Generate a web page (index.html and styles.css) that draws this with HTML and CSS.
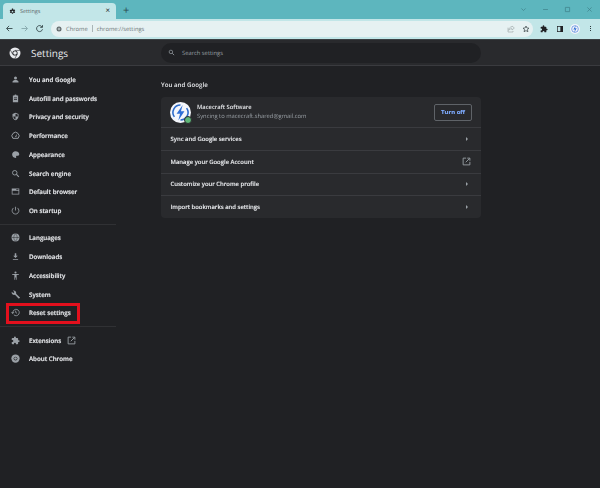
FILE: index.html
```html
<!DOCTYPE html>
<html>
  <head>
    <title>Settings</title>
    <link rel="stylesheet" href="styles.css">
  </head>
  <body>
    <svg class="icon-defs" width="0" height="0">
      <symbol id="i-logo" viewBox="0 0 24 24"><circle cx="12" cy="12" r="11" fill="#e8eaed"/><circle cx="12" cy="12" r="5.2" fill="#202124"/><circle cx="12" cy="12" r="3.6" fill="#e8eaed"/><path d="M12 6.8h10M7.5 14.6 2.6 6M16.5 14.6 11.6 23" stroke="#202124" stroke-width="1.2" fill="none"/></symbol>
      <symbol id="i-person" viewBox="0 0 24 24"><circle cx="12" cy="8" r="4"/><path d="M4 20v-2c0-3 5-4.500 8-4.500s8 1.500 8 4.500v2z"/></symbol>
      <symbol id="i-clip" viewBox="0 0 24 24"><path fill-rule="evenodd" d="M5 4h4a3 3 0 0 1 6 0h4v18H5zM8 9v2h8V9zm0 4v2h8v-2z"/></symbol>
      <symbol id="i-shield" viewBox="0 0 24 24"><path fill-rule="evenodd" d="M12 2l8 3v6c0 5-3.400 9.500-8 11-4.600-1.500-8-6-8-11V5zm0 2.500V12H6c.3 3.700 2.800 6.800 6 8v-8h6V6.500z"/></symbol>
      <symbol id="i-gauge" viewBox="0 0 24 24"><path fill="none" stroke="currentColor" stroke-width="2.600" d="M5 19.500a9.500 9.500 0 1 1 14 0z"/><path d="M10.500 15l6-8-2.500 9z"/></symbol>
      <symbol id="i-palette" viewBox="0 0 24 24"><path d="M12 3c-5 0-9 4-9 9s4 9 9 9c1.500 0 2-1 2-2s-1-1.500-.5-2.500 1.500-1 3-1c3 0 5.500-1.500 5.500-4.500C22 6 17 3 12 3z"/></symbol>
      <symbol id="i-search" viewBox="0 0 24 24"><circle cx="10" cy="10" r="6" fill="none" stroke="currentColor" stroke-width="2.400"/><path d="M14.500 14.500 21 21" stroke="currentColor" stroke-width="2.800"/></symbol>
      <symbol id="i-browser" viewBox="0 0 24 24"><path fill-rule="evenodd" d="M2 4h20v16H2zm2 6v8h16v-8zm10-4v2h6V6z"/></symbol>
      <symbol id="i-power" viewBox="0 0 24 24"><path fill="none" stroke="currentColor" stroke-width="2.200" d="M12 2v10M7 5a9 9 0 1 0 10 0"/></symbol>
      <symbol id="i-globe" viewBox="0 0 24 24"><circle cx="12" cy="12" r="10.500"/><path fill="none" stroke="#202124" stroke-width="1.200" d="M2 12h20M12 2c-6 6-6 14 0 20M12 2c6 6 6 14 0 20"/></symbol>
      <symbol id="i-download" viewBox="0 0 24 24"><path d="M10 3h4v7h4l-6 6-6-6h4zM5 19h14v2H5z"/></symbol>
      <symbol id="i-access" viewBox="0 0 24 24"><circle cx="12" cy="4" r="2.800"/><path d="M3 8h18v2.200l-6 .7V23h-2v-6h-2v6H9V10.900l-6-.7z"/></symbol>
      <symbol id="i-wrench" viewBox="0 0 24 24"><path d="M23 19.500 13.500 10c.8-2.300.3-5-1.600-6.900C10 1.200 7.300.7 5 1.600l4 4-2.800 2.800-4-4c-1 2.300-.4 5 1.500 6.900 1.900 1.900 4.600 2.400 6.900 1.600l9.500 9.500c.4.400 1 .4 1.400 0l2-1.500c.7-.4.900-1 .5-1.400z"/></symbol>
      <symbol id="i-reset" viewBox="0 0 24 24"><path fill="none" stroke="currentColor" stroke-width="2.200" d="M5 12a8.500 8.500 0 1 1 2.600 6.200M12.500 7v5l3.500 2"/><path d="M0 11h9l-4.500 5z"/></symbol>
      <symbol id="i-puzzle" viewBox="0 0 24 24"><path d="M20.500 11H19V7a2 2 0 0 0-2-2h-4V3.500a2.500 2.500 0 0 0-5 0V5H4a2 2 0 0 0-2 2v3.800h1.500a2.700 2.700 0 0 1 0 5.400H2V20a2 2 0 0 0 2 2h3.800v-1.500a2.700 2.700 0 0 1 5.400 0V22H17a2 2 0 0 0 2-2v-4h1.500a2.500 2.500 0 0 0 0-5z"/></symbol>
      <symbol id="i-chrome" viewBox="0 0 24 24"><circle cx="12" cy="12" r="11"/><circle cx="12" cy="12" r="5" fill="#202124"/><circle cx="12" cy="12" r="3.500"/></symbol>
      <symbol id="i-open" viewBox="0 0 24 24"><path fill="none" stroke="currentColor" stroke-width="2.400" d="M11 3H3v18h18v-8M10 14 20 4M14 3h7v7"/></symbol>
    </svg>

    <div class="tab-strip">
      <div class="tab">
        <svg class="tab-gear" viewBox="0 0 24 24"><path fill-rule="evenodd" d="M10 2h4l.5 3 2 1 2.800-1.200 2 3.400-2.400 1.800v2l2.400 1.800-2 3.400-2.800-1.200-2 1-.5 3h-4l-.5-3-2-1-2.800 1.200-2-3.400L4.700 13v-2L2.300 9.200l2-3.400L7.100 7l2-1zM12 9a3 3 0 1 0 0 6 3 3 0 0 0 0-6z"/></svg>
        <span class="tab-title">Settings</span>
        <span class="tab-close">×</span>
      </div>
      <span class="new-tab">+</span>
      <div class="window-buttons">
        <svg viewBox="0 0 10 10"><path d="M2 3.500 5 6.500 8 3.500"/></svg>
        <svg viewBox="0 0 10 10"><path d="M1.500 5h7"/></svg>
        <svg viewBox="0 0 10 10"><path d="M2 2h6v6H2z"/></svg>
        <svg viewBox="0 0 10 10"><path d="M2 2l6 6M8 2l-6 6"/></svg>
      </div>
    </div>

    <div class="toolbar">
      <svg class="nav-btn" viewBox="0 0 24 24"><path d="M20 12H5M11 5l-7 7 7 7"/></svg>
      <svg class="nav-btn nav-btn-off" viewBox="0 0 24 24"><path d="M4 12h15M13 5l7 7-7 7"/></svg>
      <svg class="nav-btn" viewBox="0 0 24 24"><path d="M19 8a8 8 0 1 0 1 6M20 3v6h-6"/></svg>
      <div class="omnibox">
        <svg class="omni-logo" viewBox="0 0 24 24"><circle cx="12" cy="12" r="10"/><circle cx="12" cy="12" r="5" fill="#e6f1f2"/><circle cx="12" cy="12" r="3.200"/></svg>
        <span class="omni-chip">Chrome</span>
        <span class="omni-sep"></span>
        <span class="omni-url">chrome://settings</span>
        <svg class="omni-share" viewBox="0 0 24 24"><path d="M15 3l7 6-7 6v-4c-5 0-8 2-10 5 0-6 4-10 10-11zM3 8v13h15v-3"/></svg>
        <svg class="omni-star" viewBox="0 0 24 24"><path d="M12 3l2.700 6 6.300.6-4.800 4.200 1.500 6.400L12 16.800l-5.700 3.400 1.500-6.400L3 9.600 9.300 9z"/></svg>
      </div>
      <svg class="tool-icon" viewBox="0 0 24 24"><use href="#i-puzzle"/></svg>
      <svg class="tool-icon tool-panel" viewBox="0 0 24 24"><path fill-rule="evenodd" d="M3 3h18v18H3zm2 2v14h8V5z"/></svg>
      <div class="tool-avatar">
        <svg viewBox="0 0 24 24"><circle cx="12" cy="12" r="12" fill="#f3f5fb"/><circle cx="12" cy="12" r="8" fill="none" stroke="#3b78d8" stroke-width="1.500"/><path d="M14 3 8 13h4l-2 8 6-11h-4z" fill="#2f6fd6"/></svg>
      </div>
      <span class="tool-menu"><i></i><i></i><i></i></span>
    </div>

    <div class="settings-header">
      <div class="brand">
        <svg class="brand-logo"><use href="#i-logo"/></svg>
        <span class="brand-title">Settings</span>
      </div>
      <div class="search-box">
        <svg class="search-icon"><use href="#i-search"/></svg>
        <span>Search settings</span>
      </div>
    </div>

    <div class="settings-main">
      <nav class="sidebar">
        <a class="nav-item"><svg><use href="#i-person"/></svg>You and Google</a>
        <a class="nav-item"><svg><use href="#i-clip"/></svg>Autofill and passwords</a>
        <a class="nav-item"><svg><use href="#i-shield"/></svg>Privacy and security</a>
        <a class="nav-item"><svg><use href="#i-gauge"/></svg>Performance</a>
        <a class="nav-item"><svg><use href="#i-palette"/></svg>Appearance</a>
        <a class="nav-item"><svg><use href="#i-search"/></svg>Search engine</a>
        <a class="nav-item"><svg><use href="#i-browser"/></svg>Default browser</a>
        <a class="nav-item"><svg><use href="#i-power"/></svg>On startup</a>
        <hr class="nav-sep">
        <a class="nav-item"><svg><use href="#i-globe"/></svg>Languages</a>
        <a class="nav-item"><svg><use href="#i-download"/></svg>Downloads</a>
        <a class="nav-item"><svg><use href="#i-access"/></svg>Accessibility</a>
        <a class="nav-item"><svg><use href="#i-wrench"/></svg>System</a>
        <a class="nav-item nav-marked"><svg><use href="#i-reset"/></svg>Reset settings</a>
        <hr class="nav-sep">
        <a class="nav-item"><svg><use href="#i-puzzle"/></svg>Extensions<svg class="nav-open"><use href="#i-open"/></svg></a>
        <a class="nav-item"><svg><use href="#i-chrome"/></svg>About Chrome</a>
      </nav>

      <section class="content">
        <h2 class="section-title">You and Google</h2>
        <div class="card">
          <div class="card-profile">
            <div class="avatar">
              <svg viewBox="0 0 24 24"><circle cx="12" cy="12" r="12" fill="#f4f6fb"/><path d="M5 17A8.500 8.500 0 0 1 12 3.500M19 7a8.500 8.500 0 0 1-7 13.500" fill="none" stroke="#2c6bc9" stroke-width="1.800"/><path d="M14.500 3.500 7.500 13.500h4l-2 7.500 7-10.500h-4z" fill="#2f6fd6"/></svg>
              <span class="avatar-badge"></span>
            </div>
            <div class="profile-text">
              <div class="profile-name">Macecraft Software</div>
              <div class="profile-mail">Syncing to macecraft.shared@gmail.com</div>
            </div>
            <button class="turn-off">Turn off</button>
          </div>
          <div class="card-row">Sync and Google services<span class="arrow"></span></div>
          <div class="card-row">Manage your Google Account<svg class="row-open"><use href="#i-open"/></svg></div>
          <div class="card-row">Customize your Chrome profile<span class="arrow"></span></div>
          <div class="card-row">Import bookmarks and settings<span class="arrow"></span></div>
        </div>
      </section>
    </div>
  </body>
</html>
```

FILE: styles.css
```css
* {
  box-sizing: border-box;
}

html,
body {
  height: 100%;
}

body {
  margin: 0;
  background-color: #202124;
  color: #e8eaed;
  font-family: "Open Sans", "Liberation Sans", sans-serif;
  font-size: 6.5px;
  text-rendering: geometricPrecision;
  overflow: hidden;
}

.icon-defs {
  position: absolute;
}

/* browser chrome */
.tab-strip {
  display: flex;
  align-items: flex-end;
  height: 19px;
  background-color: #5db6be;
}

.tab {
  display: flex;
  align-items: center;
  width: 113px;
  height: 16px;
  margin-left: 3px;
  padding: 0 6px 0 6px;
  background-color: #c2e6e8;
  border-radius: 4px 4px 0 0;
}

.tab-gear {
  width: 7px;
  height: 7px;
  fill: #202124;
}

.tab-title {
  flex: 1;
  margin-left: 4px;
  color: #5f6a6c;
  font-size: 5.500px;
}

.tab-close {
  color: #202124;
  font-size: 8px;
  line-height: 1;
}

.new-tab {
  margin: 0 0 1px 7px;
  color: #2c4a4e;
  font-size: 11px;
  line-height: 14px;
}

.window-buttons {
  display: flex;
  align-self: center;
  gap: 15px;
  margin-left: auto;
  margin-right: 7px;
}

.window-buttons svg {
  width: 7px;
  height: 7px;
  fill: none;
  stroke: #3f8189;
  stroke-width: 1;
}

.toolbar {
  display: flex;
  align-items: center;
  height: 21px;
  padding: 0 9px 1px 5px;
  background-color: #c2e6e8;
  border-bottom: 1px solid #3c4043;
}

.nav-btn {
  width: 9px;
  height: 9px;
  margin-right: 6px;
  fill: none;
  stroke: #2b3a3d;
  stroke-width: 2.200;
}

.nav-btn-off {
  stroke: #7fa2a6;
}

.omnibox {
  display: flex;
  align-items: center;
  flex: 1;
  height: 16px;
  margin-left: 1px;
  padding: 0 3px 0 5px;
  background-color: #e6f1f2;
  border-radius: 8px;
  color: #6d7678;
  font-size: 5.800px;
}

.omni-logo {
  width: 6px;
  height: 6px;
  fill: #5f6769;
}

.omni-chip {
  margin-left: 4px;
}

.omni-sep {
  width: 1px;
  height: 7px;
  margin: 0 4px;
  background-color: #a9b4b6;
}

.omni-url {
  flex: 1;
}

.omni-share {
  width: 8px;
  height: 8px;
  margin-right: 7px;
  fill: none;
  stroke: #a0a9ab;
  stroke-width: 2;
}

.omni-star {
  width: 8px;
  height: 8px;
  fill: none;
  stroke: #3c4648;
  stroke-width: 2.200;
}

.tool-icon {
  width: 8px;
  height: 8px;
  margin-left: 7px;
  fill: #202124;
}

.tool-panel {
  margin-left: 8px;
}

.tool-avatar {
  width: 10px;
  height: 10px;
  margin-left: 6px;
}

.tool-avatar svg {
  display: block;
  width: 100%;
  height: 100%;
}

.tool-menu {
  display: flex;
  flex-direction: column;
  gap: 1px;
  margin-left: 10px;
}

.tool-menu i {
  width: 1px;
  height: 1px;
  background-color: #2b3a3d;
}

/* settings header */
.settings-header {
  display: flex;
  align-items: center;
  height: 26px;
  background-color: #292a2d;
  border-bottom: 1px solid #3a3b3f;
}

.brand {
  display: flex;
  align-items: center;
  width: 161px;
  padding-left: 9px;
}

.brand-logo {
  width: 12px;
  height: 12px;
}

.brand-title {
  margin-left: 10px;
  font-size: 10px;
}

.search-box {
  display: flex;
  align-items: center;
  width: 320px;
  height: 20px;
  padding-left: 7px;
  background-color: #202124;
  border-radius: 10px;
  color: #9aa0a6;
  font-size: 5.800px;
}

.search-icon {
  width: 7px;
  height: 7px;
  margin-right: 7px;
  color: #9aa0a6;
}

/* sidebar */
.settings-main {
  display: flex;
}

.sidebar {
  display: flex;
  flex-direction: column;
  width: 161px;
  padding-top: 4px;
  will-change: opacity;
}

.nav-item {
  position: relative;
  display: flex;
  align-items: center;
  width: 120px;
  height: 18.750px;
  padding-left: 10.500px;
  color: #e8eaed;
  font-size: 6.200px;
  font-weight: 600;
  -webkit-text-stroke: 0.15px #e8eaed;
}

.nav-item svg {
  flex: none;
  width: 9px;
  height: 9px;
  margin-right: 9.500px;
  color: #9aa0a6;
  fill: #9aa0a6;
}

.nav-item .nav-open {
  width: 9px;
  height: 9px;
  margin: 0 0 0 6px;
  fill: none;
}

.nav-sep {
  width: 116px;
  height: 1px;
  margin: 4px 0 3.500px;
  background-color: #303134;
  border: 0;
}

.nav-marked::after {
  content: "";
  position: absolute;
  left: 6px;
  top: -1px;
  width: 68px;
  height: 15px;
  border: 3px solid #e3101d;
}

/* content */
.content {
  width: 320px;
  will-change: opacity;
}

.section-title {
  margin: 14px 0 8px;
  font-size: 6.200px;
  font-weight: 600;
  line-height: 9px;
}

.card {
  background-color: #292a2d;
  border-radius: 4px;
}

.card-profile {
  display: flex;
  align-items: center;
  height: 30px;
  padding: 0 9px 0 9px;
}

.avatar {
  position: relative;
  width: 21px;
  height: 21px;
}

.avatar svg {
  display: block;
  width: 100%;
  height: 100%;
}

.avatar-badge {
  position: absolute;
  right: -1px;
  bottom: -1px;
  width: 8px;
  height: 8px;
  background-color: #5fb878;
  border: 1px solid #292a2d;
  border-radius: 50%;
}

.profile-text {
  flex: 1;
  margin-left: 6px;
}

.profile-name {
  font-size: 5.800px;
  font-weight: 600;
  line-height: 9px;
}

.profile-mail {
  color: #9aa0a6;
  font-size: 5.800px;
  line-height: 9px;
}

.turn-off {
  width: 38px;
  height: 17px;
  padding: 0;
  background: transparent;
  border: 1px solid #5f6368;
  border-radius: 2px;
  color: #7fabff;
  font-family: inherit;
  font-size: 6px;
  font-weight: 700;
  -webkit-text-stroke: 0.15px #7fabff;
}

.card-row {
  display: flex;
  align-items: center;
  justify-content: space-between;
  height: 22.750px;
  padding: 0 13px 0 9.500px;
  border-top: 1px solid #3a3b3f;
  font-size: 5.900px;
  font-weight: 600;
  -webkit-text-stroke: 0.1px #e8eaed;
}

.arrow {
  width: 0;
  height: 0;
  border-top: 2px solid transparent;
  border-bottom: 2px solid transparent;
  border-left: 2.500px solid #9aa0a6;
}

.row-open {
  width: 9px;
  height: 9px;
  margin-right: -3px;
  color: #9aa0a6;
  fill: none;
}
```
